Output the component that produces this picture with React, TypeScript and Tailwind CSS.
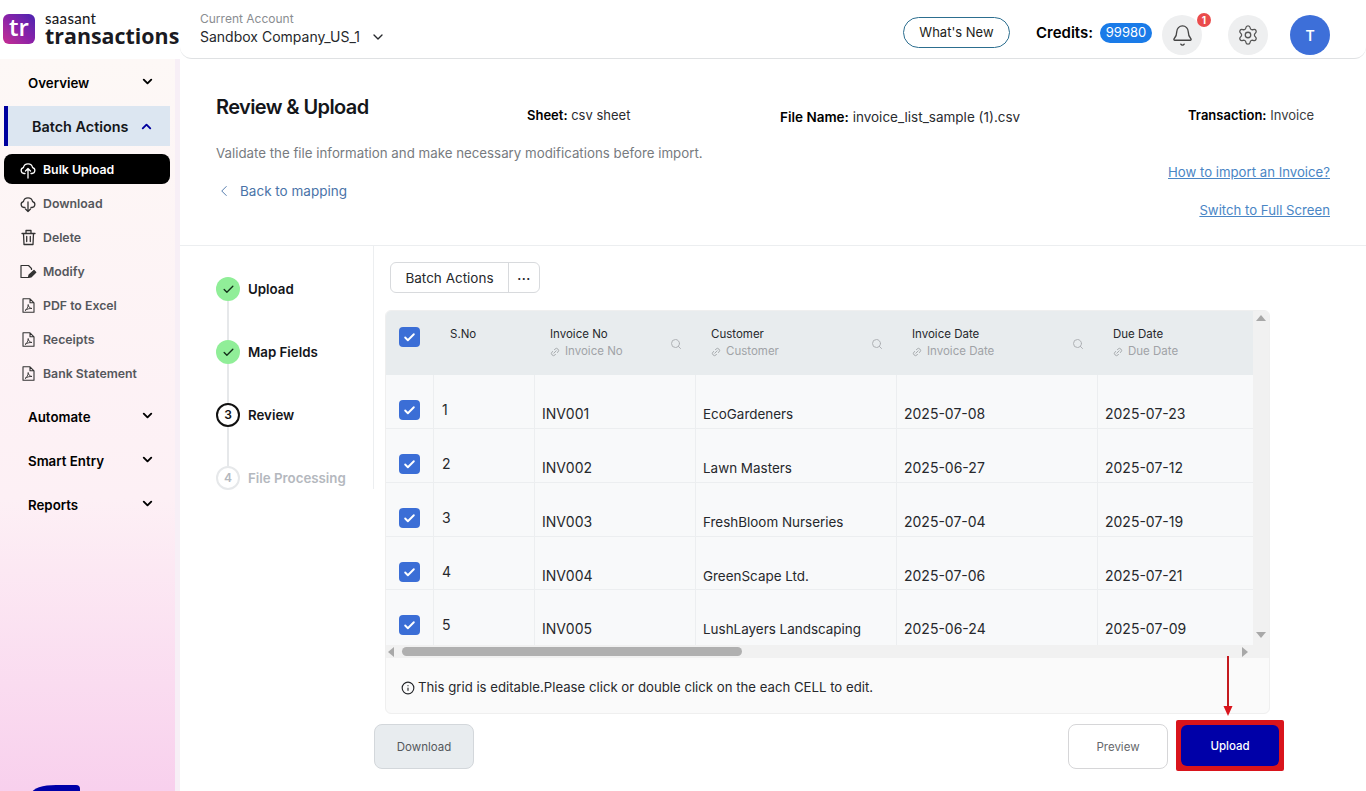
import { Bell, Check, ChevronDown, ChevronLeft, ChevronUp, Info, Link2, Search, Settings } from 'lucide-react'

const rows = [
  { no: 1, inv: 'INV001', customer: 'EcoGardeners', date: '2025-07-08', due: '2025-07-23', h: 'h-[54px]' },
  { no: 2, inv: 'INV002', customer: 'Lawn Masters', date: '2025-06-27', due: '2025-07-12', h: 'h-[54px]' },
  { no: 3, inv: 'INV003', customer: 'FreshBloom Nurseries', date: '2025-07-04', due: '2025-07-19', h: 'h-[54px]' },
  { no: 4, inv: 'INV004', customer: 'GreenScape Ltd.', date: '2025-07-06', due: '2025-07-21', h: 'h-[53px]' },
  { no: 5, inv: 'INV005', customer: 'LushLayers Landscaping', date: '2025-06-24', due: '2025-07-09', h: 'h-[56px]' },
]

const gridCols = 'grid grid-cols-[48px_101px_161px_201px_201px_158px]'

function CloudIcon({ up }: { up?: boolean }) {
  return (
    <svg width="16" height="19" viewBox="0 0 16 19" fill="none" stroke="currentColor" strokeWidth="1.3" strokeLinecap="round" strokeLinejoin="round">
      <path d="M5 13.5H4A3 3 0 0 1 3.4 7.6 4.7 4.7 0 0 1 12.6 7.6 3 3 0 0 1 12 13.5H11" />
      {up ? <path d="M8 18V8.5M5.5 11 8 8.5 10.5 11" /> : <path d="M8 8V17.5M5.5 15 8 17.5 10.5 15" />}
    </svg>
  )
}

function TrashIcon() {
  return (
    <svg width="15" height="17" viewBox="0 0 15 17" fill="none" stroke="currentColor" strokeWidth="1.3" strokeLinecap="round" strokeLinejoin="round">
      <path d="M1 4.5H14M5 4.5V1.5H10V4.5M2.5 4.5 3 15.5H12L12.5 4.5M5.7 7.5V12.5M9.3 7.5V12.5" />
    </svg>
  )
}

function ModifyIcon() {
  return (
    <svg width="17" height="15" viewBox="0 0 17 15" fill="none" stroke="currentColor" strokeWidth="1.2" strokeLinejoin="round">
      <path d="M9 13.5H1V1.5H8.5L11.5 4.5V6" />
      <path d="M8.5 13.5 9 11 14 6.5 15.8 8.3 11 13Z" fill="currentColor" />
    </svg>
  )
}

function PdfIcon() {
  return (
    <svg width="13" height="15" viewBox="0 0 13 15" fill="none" stroke="currentColor" strokeWidth="1.1" strokeLinejoin="round">
      <path d="M1 .8H8L12 4.8V14.2H1ZM8 .8V4.8H12" />
      <path d="M3 12.5C5 11.5 6.2 8.8 6.2 6.5 6.2 8.5 7.5 10 10 10.5 7.5 10.3 5 11 3 12.5Z" strokeWidth="0.9" />
    </svg>
  )
}

function GroupItem({ label }: { label: string }) {
  return (
    <div className="h-[44px] flex items-center justify-between pl-[28px] pr-[20px] text-[13.3px] font-semibold text-black">
      <span className="translate-y-px">{label}</span>
      <ChevronDown className="h-[15px] w-[15px] -translate-y-[2px]" strokeWidth={3} />
    </div>
  )
}

function SubItem({ label, icon, active }: { label: string; icon: React.ReactNode; active?: boolean }) {
  return (
    <div className="h-[34px] flex items-center">
      <div className={`ml-[4px] w-[166px] h-[30px] flex items-center rounded-lg pl-[15px] gap-[6px] text-[12.3px] font-semibold ${active ? 'bg-black text-white' : 'text-[#55575c]'}`}>
        <span className={`w-[18px] flex justify-center ${active ? 'text-white' : 'text-[#333]'}`}>{icon}</span>
        <span className="translate-y-px">{label}</span>
      </div>
    </div>
  )
}

function Sidebar() {
  return (
    <aside className="w-[180px] h-[732px] shrink-0 border-r-[5px] border-[#f7eff6] bg-gradient-to-b from-[#fdf8f6] via-[#fdf0f5] via-60% to-[#f8d0ed] pt-[2px]">
      <GroupItem label="Overview" />
      <div className="mt-[1px] ml-[4px] w-[166px] h-[40px] flex items-center justify-between bg-[#dce6f1] border-l-[4px] border-[#00009e] pl-[24px] pr-[16px] text-[14.4px] font-semibold text-[#14161a]">
        <span className="translate-y-px">Batch Actions</span>
        <ChevronUp className="h-[15px] w-[15px] text-[#00009e]" strokeWidth={3} />
      </div>
      <div className="mt-[6px]">
        <SubItem active label="Bulk Upload" icon={<CloudIcon up />} />
        <SubItem label="Download" icon={<CloudIcon />} />
        <SubItem label="Delete" icon={<TrashIcon />} />
        <SubItem label="Modify" icon={<ModifyIcon />} />
        <SubItem label="PDF to Excel" icon={<PdfIcon />} />
        <SubItem label="Receipts" icon={<PdfIcon />} />
        <SubItem label="Bank Statement" icon={<PdfIcon />} />
      </div>
      <div className="mt-[5px]">
        <GroupItem label="Automate" />
        <GroupItem label="Smart Entry" />
        <GroupItem label="Reports" />
      </div>
    </aside>
  )
}

function Header() {
  return (
    <header className="h-[59px] flex shrink-0">
      <div className="w-[180px] shrink-0 flex items-start pl-[3px] pt-[14px] gap-[10px]">
        <div className="h-[30px] w-[32px] shrink-0 rounded-md bg-gradient-to-tr from-[#c82a90] via-[#8a20a8] to-[#4a20b0] flex items-center justify-center text-white text-[24px] font-semibold leading-none font-['Open_Sans',sans-serif]">
          <span className="-translate-y-[2px]">tr</span>
        </div>
        <div className="flex flex-col -mt-[2px]">
          <span className="text-[15px] leading-[13px] tracking-[0.3px] text-[#1a1a22] font-['Lato',sans-serif] font-medium">saasant</span>
          <span className="text-[21.4px] font-bold leading-[21px] text-[#1a1a22] font-['Open_Sans',sans-serif]">transactions</span>
        </div>
      </div>
      <div className="flex-1 flex items-start border-b border-[#dfe1e3] rounded-b-xl pl-[20px] pr-[36px]">
        <div className="pt-[11px]">
          <div className="text-[12px] leading-[16px] text-[#8a8d91]">Current Account</div>
          <div className="mt-[1px] flex items-center gap-[10px] text-[14px] leading-[18px] text-[#26282c]">
            Sandbox Company_US_1
            <ChevronDown className="h-[16px] w-[16px]" />
          </div>
        </div>
        <div className="ml-auto mt-[17px] h-[31px] w-[107px] rounded-full border border-[#2c6e8f] flex items-center justify-center text-[13px] text-[#1c1d20]">
          What's New
        </div>
        <span className="ml-[26px] mt-[23px] leading-[20px] text-[15px] font-semibold text-black">Credits:</span>
        <span className="ml-[7px] mt-[23px] w-[52px] h-[20px] rounded-full bg-[#1a7be8] flex items-center justify-center text-[13px] text-white">99980</span>
        <div className="relative ml-[10px] mt-[15px] h-[40px] w-[40px] rounded-full bg-[#eeeff0] flex items-center justify-center">
          <Bell className="h-[23px] w-[23px] text-[#444]" strokeWidth={1.4} />
          <span className="absolute -top-[2px] -right-[9px] h-[14px] w-[14px] rounded-full bg-[#ea4c4c] text-white text-[10px] font-bold flex items-center justify-center">1</span>
        </div>
        <div className="ml-[26px] mt-[15px] h-[40px] w-[40px] rounded-full bg-[#eeeff0] flex items-center justify-center">
          <Settings className="h-[22px] w-[22px] text-[#555]" strokeWidth={1.4} />
        </div>
        <div className="ml-[22px] mt-[15px] h-[40px] w-[40px] rounded-full bg-[#3d6fd9] flex items-center justify-center text-[14px] font-semibold text-white">T</div>
      </div>
    </header>
  )
}

function PageHead() {
  return (
    <div className="h-[187px] border-b border-[#eceef0] pl-[36px] pr-[36px] flex flex-col">
      <div className="flex items-start pt-[34px]">
        <h1 className="w-[311px] text-[20px] leading-[28px] font-semibold tracking-[-0.6px] text-[#14161a]">Review &amp; Upload</h1>
        <p className="w-[253px] pt-[12px] text-[13px] leading-[20px] text-[#2a2c30]"><b className="font-semibold text-black">Sheet:</b> csv sheet</p>
        <p className="w-[408px] pt-[14px] text-[13.5px] leading-[20px] text-[#2a2c30]"><b className="font-semibold text-black">File Name:</b> invoice_list_sample (1).csv</p>
        <p className="pt-[12px] text-[13px] leading-[20px] text-[#3a3c40]"><b className="font-semibold text-black">Transaction:</b> Invoice</p>
      </div>
      <div className="flex justify-between">
        <div>
          <p className="mt-[16px] text-[13.3px] leading-[20px] text-[#777b80]">Validate the file information and make necessary modifications before import.</p>
          <div className="mt-[18px] flex items-center gap-[7px] text-[13.5px] leading-[20px] text-[#4a73a8]">
            <ChevronLeft className="h-[18px] w-[18px] -ml-[1px]" strokeWidth={1.25} />
            Back to mapping
          </div>
        </div>
        <div className="flex flex-col items-end gap-[18px] pt-[35px] text-[13.2px] leading-[20px] text-[#4a86c5] underline">
          <span>How to import an Invoice?</span>
          <span>Switch to Full Screen</span>
        </div>
      </div>
    </div>
  )
}

function Step({ label, state, last }: { label: string; state: 'done' | 'current' | 'todo'; last?: boolean }) {
  return (
    <div className="flex gap-[8px] h-[63px]">
      <div className="flex flex-col items-center w-[24px]">
        {state === 'done' && (
          <div className="h-[24px] w-[24px] rounded-full bg-[#90ee98] flex items-center justify-center">
            <Check className="h-[13px] w-[13px] text-[#14301a]" strokeWidth={2.5} />
          </div>
        )}
        {state === 'current' && (
          <div className="h-[24px] w-[24px] rounded-full border-2 border-[#111] flex items-center justify-center text-[12px] font-semibold text-[#111]">3</div>
        )}
        {state === 'todo' && (
          <div className="h-[24px] w-[24px] rounded-full border-2 border-[#e6e8ea] flex items-center justify-center text-[12px] font-semibold text-[#b4b8be]">4</div>
        )}
        {!last && <div className="flex-1 w-[2px] bg-[#e6e8ea]" />}
      </div>
      <span className={`text-[13.3px] leading-[24px] font-semibold ${state === 'todo' ? 'text-[#b4b8be]' : 'text-[#14161a]'}`}>{label}</span>
    </div>
  )
}

function ColHead({ label, search = true }: { label: string; search?: boolean }) {
  return (
    <div className="flex items-start justify-between pl-[16px] pr-[13px] pt-[16px]">
      <div>
        <div className="text-[11.5px] leading-[17px] text-[#26282c]">{label}</div>
        <div className="flex items-center gap-[5px] text-[11.5px] leading-[17px] text-[#a0a3a7]">
          <Link2 className="h-[10px] w-[10px] -rotate-45" />
          {label}
        </div>
      </div>
      {search && <Search className="h-[12px] w-[12px] mt-[12px] text-[#aeb1b5]" />}
    </div>
  )
}

function CheckBox() {
  return (
    <div className="h-[20px] w-[21px] rounded-[4px] bg-[#3b6ed6] flex items-center justify-center">
      <Check className="h-[13px] w-[13px] text-white" strokeWidth={3.5} />
    </div>
  )
}

function ReviewTable() {
  return (
    <div className="ml-[11px] mt-[17px] w-[885px] h-[404px] rounded-md border border-[#efefef] bg-[#fafafa] overflow-hidden">
      <div className="flex h-[335px] -mt-px -ml-px">
        <div className="w-[870px] overflow-hidden">
          <div className={`${gridCols} h-[65px] bg-[#e8ecee]`}>
            <div className="pl-[14px] pt-[17px]"><CheckBox /></div>
            <div className="pl-[17px] pt-[16px] text-[11.5px] leading-[17px] text-[#26282c]">S.No</div>
            <ColHead label="Invoice No" />
            <ColHead label="Customer" />
            <ColHead label="Invoice Date" />
            <ColHead label="Due Date" search={false} />
          </div>
          {rows.map((r) => (
            <div key={r.no} className={`${gridCols} ${r.h} bg-[#f8f9fa] border-b border-[#eceef0] text-[14px] text-[#26282c]`}>
              <div className="pl-[14px] pt-[25px]"><CheckBox /></div>
              <div className="border-l border-[#eceef0] pl-[8px] pt-[25px] leading-[20px]">{r.no}</div>
              <div className="border-l border-[#eceef0] pl-[7px] pt-[29px] leading-[20px]">{r.inv}</div>
              <div className="border-l border-[#eceef0] pl-[7px] pt-[29px] leading-[20px] text-[13.45px]">{r.customer}</div>
              <div className="border-l border-[#eceef0] pl-[7px] pt-[29px] leading-[20px]">{r.date}</div>
              <div className="border-l border-[#eceef0] pl-[7px] pt-[29px] leading-[20px]">{r.due}</div>
            </div>
          ))}
        </div>
        <div className="w-[16px] bg-[#f1f1f1] flex flex-col items-center justify-between pt-[5px] pb-[7px]">
          <div className="h-0 w-0 border-x-[5px] border-x-transparent border-b-[6px] border-b-[#a8a8a8]" />
          <div className="h-0 w-0 border-x-[5px] border-x-transparent border-t-[6px] border-t-[#a8a8a8]" />
        </div>
      </div>
      <div className="-ml-px h-[13px] bg-[#f1f1f1] flex items-center pl-[3px] pr-[21px]">
        <div className="h-0 w-0 border-y-[5px] border-y-transparent border-r-[6px] border-r-[#a8a8a8]" />
        <div className="ml-[8px] h-[9px] w-[340px] rounded-full bg-[#b0b0b0]" />
        <div className="ml-auto h-0 w-0 border-y-[5px] border-y-transparent border-l-[6px] border-l-[#a8a8a8]" />
      </div>
      <div className="flex items-center gap-[3px] pl-[15px] pt-[4px] h-[55px] text-[13.2px] text-[#26282c]">
        <Info className="h-[14px] w-[14px]" />
        This grid is editable.Please click or double click on the each CELL to edit.
      </div>
    </div>
  )
}

export default function App() {
  return (
    <div className="relative h-[791px] w-[1366px] overflow-hidden bg-white font-['Inter',sans-serif]">
      <Header />
      <div className="flex">
        <Sidebar />
        <main className="flex-1">
          <PageHead />
          <div className="flex">
            <div className="w-[194px] h-[243px] shrink-0 border-r border-[#eceef0] pl-[36px] pt-[31px]">
              <Step label="Upload" state="done" />
              <Step label="Map Fields" state="done" />
              <Step label="Review" state="current" />
              <Step label="File Processing" state="todo" last />
            </div>
            <div className="flex-1">
              <div className="ml-[16px] mt-[16px] flex h-[31px] w-[150px] rounded-md border border-[#d8dadd] text-[13.5px] text-[#26282c]">
                <span className="w-[118px] border-r border-[#d8dadd] flex items-center justify-center pt-[2px]">Batch Actions</span>
                <span className="flex-1 flex items-center justify-center tracking-[0.5px] text-[12px] leading-none font-bold pb-[4px]">...</span>
              </div>
              <ReviewTable />
              <div className="mt-[6px] w-[910px] flex justify-between">
                <button className="mt-[4px] h-[45px] w-[100px] rounded-lg border border-[#d3d7db] bg-[#e8ecef] pt-[2px] text-[11.5px] text-[#55585c]">Download</button>
                <div className="flex gap-[8px]">
                  <button className="mt-[4px] h-[45px] w-[100px] rounded-lg border border-[#d6d6d8] bg-white pt-[2px] text-[11.5px] text-[#66686c]">Preview</button>
                  <div className="h-[51px] w-[108px] rounded-[2px] bg-[#d9141c] p-[5px]">
                    <button className="h-[41px] w-[98px] rounded-md bg-[#0000a8] pt-[2px] text-[11.5px] font-medium text-white">Upload</button>
                  </div>
                </div>
              </div>
            </div>
          </div>
        </main>
      </div>
      {/* annotation arrow over the grid */}
      <svg className="absolute left-[1222px] top-[656px]" width="12" height="61" viewBox="0 0 12 61">
        <path d="M6 0V52" stroke="#c41a1e" strokeWidth="2" />
        <path d="M1.5 50H10.5L6 60Z" fill="#d9141c" />
      </svg>
      {/* chat launcher peeking at the bottom of the sidebar */}
      <div className="absolute left-[32px] top-[785px] h-[12px] w-[48px] rounded-tl-[24px_8px] rounded-tr-[4px] bg-[#0000a8]" />
    </div>
  )
}
